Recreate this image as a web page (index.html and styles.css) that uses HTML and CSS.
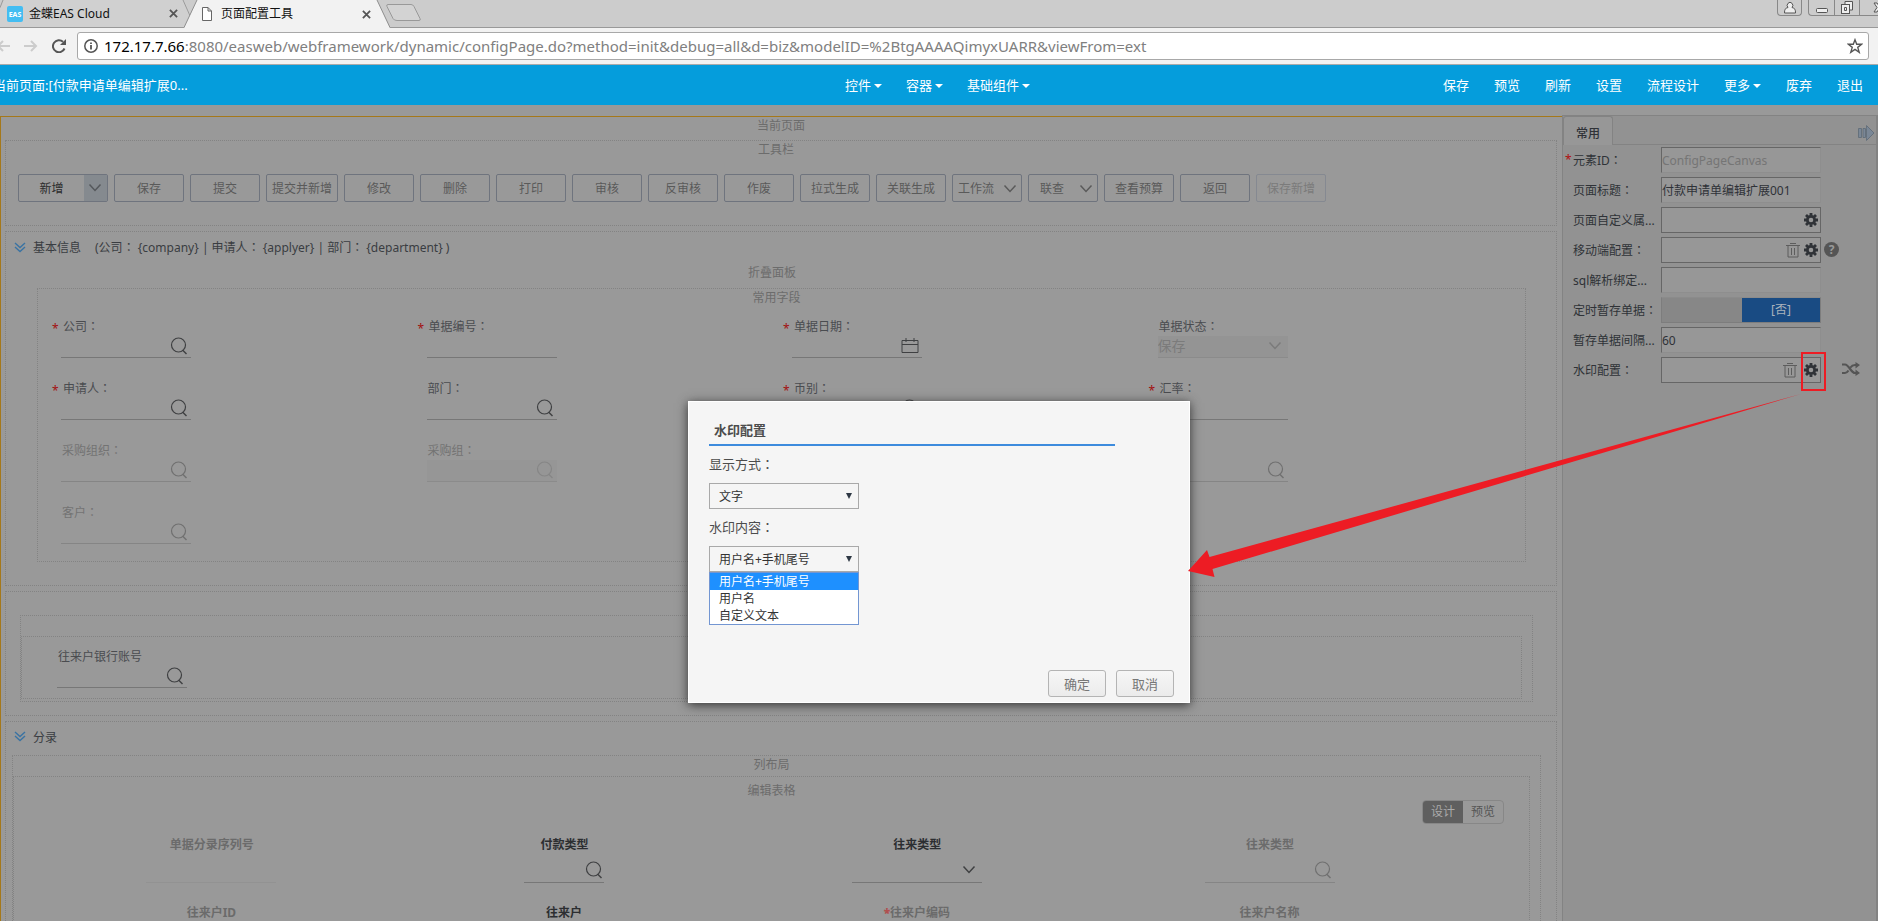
FILE: index.html
```html
<!DOCTYPE html>
<html lang="zh-CN">
<head>
<meta charset="utf-8">
<title>页面配置工具</title>
<link rel="stylesheet" href="styles.css">
</head>
<body>
<svg class="sprite" aria-hidden="true">
  <symbol id="search" viewBox="0 0 18 18"><ellipse cx="8.500" cy="8" rx="7" ry="7" fill="none" stroke="currentColor" stroke-width="1.200"/><path d="M12.500 13l4 4" fill="none" stroke="currentColor" stroke-width="1.500"/></symbol>
  <symbol id="chevron" viewBox="0 0 14 10"><path d="M1.500 1.500L7 7.500L12.500 1.500" fill="none" stroke="currentColor" stroke-width="1.500"/></symbol>
  <symbol id="calendar" viewBox="0 0 18 16"><path d="M1 2.500h16v12H1zM1 6.500h16M5 0v4M13 0v4" fill="none" stroke="currentColor" stroke-width="1"/></symbol>
  <symbol id="fold" viewBox="0 0 12 11"><path d="M1 1l5 4.500L11 1M1 5l5 4.500L11 5" fill="none" stroke="currentColor" stroke-width="1.400"/></symbol>
  <symbol id="gear" viewBox="0 0 14 14"><g fill="none" stroke="currentColor"><circle cx="7" cy="7" r="3.700" stroke-width="2.800"/><path stroke-width="2.800" d="M7 0v2.500M7 11.500V14M0 7h2.500M11.500 7H14M2 2l2 2M10 10l2 2M12 2l-2 2M4 10l-2 2"/></g></symbol>
  <symbol id="trash" viewBox="0 0 14 15"><path d="M0 2.500h14M4 .5h6M2 3v11h10V3M5.500 5v7M8.500 5v7" fill="none" stroke="currentColor"/></symbol>
  <symbol id="close" viewBox="0 0 10 10"><path d="M1 1l8 8M9 1l-8 8" stroke="currentColor" stroke-width="2" fill="none"/></symbol>
</svg>

<div class="tabstrip">
  <div class="tab tab-first">
    <svg class="tab-shape" viewBox="0 0 192 28" preserveAspectRatio="none"><path d="M0 28V8L4 0H184L197 28" fill="#d0d0d0"/><path d="M0 8L3 0M183 0l9 21" fill="none" stroke="#999"/></svg>
    <svg class="fav" viewBox="0 0 16 16"><rect width="16" height="16" rx="2" fill="#43bdf2"/><text x="8" y="11" text-anchor="middle" class="fav-text">EAS</text></svg>
    <span class="tab-title">金蝶EAS Cloud</span>
    <button class="tab-close" aria-label="关闭"><svg><use href="#close"/></svg></button>
  </div>
  <div class="tab tab-active">
    <svg class="tab-shape" viewBox="0 0 206 28" preserveAspectRatio="none"><path d="M0 28L13 0H193L206 28Z" fill="#f2f2f2"/><path d="M0 27.500L13 0M193 0L206 27.500" fill="none" stroke="#8f8f8f"/></svg>
    <svg class="page-ico" viewBox="0 0 10 14"><path d="M.5 .5h5.500l3.500 3.500v9.500h-9zM6 .5v3.500h3.500" fill="#fff" stroke="#666"/></svg>
    <span class="tab-title">页面配置工具</span>
    <button class="tab-close" aria-label="关闭"><svg><use href="#close"/></svg></button>
  </div>
  <button class="newtab" aria-label="新标签页"><svg viewBox="0 0 36 18"><path d="M2 .5h23q2 0 3 2l6 12q1 2-1 2H11q-3 0-4-2L1 2.500Q0 .5 2 .5z" fill="#d3d3d3" stroke="#999"/></svg></button>
  <div class="win">
    <button class="win-btn win-user" aria-label="用户"><svg viewBox="0 0 12 13"><path d="M4 6.500a2.800 3 0 1 1 4 0c3 .8 3.500 2 3.500 5.500H.5c0-3.500.5-4.700 3.500-5.500z" fill="#eee" stroke="#555"/></svg></button>
    <div class="win-group">
      <button class="win-btn" aria-label="最小化"><svg viewBox="0 0 12 13"><rect x=".5" y="7.500" width="11" height="4" rx="1" fill="#eee" stroke="#555"/></svg></button>
      <button class="win-btn" aria-label="还原"><svg viewBox="0 0 12 13"><path d="M4 3V.5h7.500v8.500H9" fill="#eee" stroke="#555"/><rect x=".5" y="3.500" width="8" height="9" fill="#eee" stroke="#555"/><path d="M3.500 6.500h2v3h-2z" fill="none" stroke="#555"/></svg></button>
      <button class="win-btn win-last" aria-label="关闭窗口"><svg viewBox="0 0 12 13"><path d="M1 2h3l2 3 2-3h3L8 6.500l3 4.500H8L6 8l-2 3H1l3-4.500z" fill="#eee" stroke="#555"/></svg></button>
    </div>
  </div>
</div>

<div class="navbar">
  <button class="nav-btn nav-dim" aria-label="后退"><svg viewBox="0 0 14 12"><path d="M14 6H2M7 1L2 6l5 5" fill="none" stroke="currentColor" stroke-width="2"/></svg></button>
  <button class="nav-btn nav-dim" aria-label="前进"><svg viewBox="0 0 14 12"><path d="M0 6h12M7 1l5 5-5 5" fill="none" stroke="currentColor" stroke-width="2"/></svg></button>
  <button class="nav-btn" aria-label="刷新"><svg viewBox="0 0 14 14"><path d="M12.500 9.500A6 6 0 1 1 11 2.800" fill="none" stroke="currentColor" stroke-width="2"/><path d="M14 0v6H8z" fill="currentColor"/></svg></button>
  <div class="omnibox">
    <svg class="info" viewBox="0 0 14 14"><circle cx="7" cy="7" r="6.200" fill="none" stroke="#555" stroke-width="1.500"/><path d="M7 6v4.500M7 3.500v1.500" stroke="#555" stroke-width="1.800"/></svg>
    <span class="url"><span class="host">172.17.7.66</span>:8080/easweb/webframework/dynamic/configPage.do?method=init&amp;debug=all&amp;d=biz&amp;modelID=%2BtgAAAAQimyxUARR&amp;viewFrom=ext</span>
    <svg class="star" viewBox="0 0 14 14"><path d="M7 1.500l1.500 4h4.300L9.400 8.200l1.300 4.300L7 10l-3.700 2.500 1.300-4.300L1.200 5.500h4.300z" fill="none" stroke="#555" stroke-width="1.200"/></svg>
  </div>
</div>

<header class="appbar">
  <div class="crumb">当前页面:[付款申请单编辑扩展0...</div>
  <nav class="menu"><a href="#" class="drop">控件</a><a href="#" class="drop">容器</a><a href="#" class="drop">基础组件</a></nav>
  <nav class="menu menu-right"><a href="#">保存</a><a href="#">预览</a><a href="#">刷新</a><a href="#">设置</a><a href="#">流程设计</a><a href="#" class="drop">更多</a><a href="#">废弃</a><a href="#">退出</a></nav>
</header>

<div class="work">
  <main class="canvas">
    <div class="hint hint-page">当前页面</div>
    <section class="box toolbox">
      <div class="hint">工具栏</div>
      <div class="tools">
        <button class="tool tool-new"><span>新增</span><i><svg><use href="#chevron"/></svg></i></button>
        <button class="tool">保存</button><button class="tool">提交</button><button class="tool tool-wide">提交并新增</button><button class="tool">修改</button><button class="tool">删除</button><button class="tool">打印</button><button class="tool">审核</button><button class="tool">反审核</button><button class="tool">作废</button><button class="tool">拉式生成</button><button class="tool">关联生成</button>
        <button class="tool tool-drop">工作流<svg><use href="#chevron"/></svg></button>
        <button class="tool tool-drop tool-short">联查<svg><use href="#chevron"/></svg></button>
        <button class="tool">查看预算</button><button class="tool">返回</button><button class="tool" disabled>保存新增</button>
      </div>
    </section>

    <section class="box basic">
      <h2 class="sec-title"><svg><use href="#fold"/></svg><span>基本信息</span><span class="sum">(公司<span class="c" lang="zh-TW">：</span> {company} | 申请人<span class="c" lang="zh-TW">：</span> {applyer} | 部门<span class="c" lang="zh-TW">：</span> {department} )</span></h2>
      <div class="hint">折叠面板</div>
      <div class="box fields-box">
        <div class="hint">常用字段</div>
        <div class="fields">
          <div class="field req"><label for="f1">公司<span class="c" lang="zh-TW">：</span></label><div class="ctl"><input id="f1"><svg><use href="#search"/></svg></div></div>
          <div class="field req"><label for="f2">单据编号<span class="c" lang="zh-TW">：</span></label><div class="ctl"><input id="f2"></div></div>
          <div class="field req"><label for="f3">单据日期<span class="c" lang="zh-TW">：</span></label><div class="ctl"><input id="f3"><svg class="cal"><use href="#calendar"/></svg></div></div>
          <div class="field"><label for="f4">单据状态<span class="c" lang="zh-TW">：</span></label><div class="ctl off"><select id="f4" disabled><option>保存</option></select><svg class="chev"><use href="#chevron"/></svg></div></div>
          <div class="field req"><label for="f5">申请人<span class="c" lang="zh-TW">：</span></label><div class="ctl"><input id="f5"><svg><use href="#search"/></svg></div></div>
          <div class="field"><label for="f6">部门<span class="c" lang="zh-TW">：</span></label><div class="ctl"><input id="f6"><svg><use href="#search"/></svg></div></div>
          <div class="field req"><label for="f7">币别<span class="c" lang="zh-TW">：</span></label><div class="ctl"><input id="f7"><svg><use href="#search"/></svg></div></div>
          <div class="field req"><label for="f8">汇率<span class="c" lang="zh-TW">：</span></label><div class="ctl"><input id="f8"></div></div>
          <div class="field dim"><label for="f9">采购组织<span class="c" lang="zh-TW">：</span></label><div class="ctl"><input id="f9"><svg><use href="#search"/></svg></div></div>
          <div class="field dim"><label for="f10">采购组<span class="c" lang="zh-TW">：</span></label><div class="ctl off"><input id="f10" disabled><svg><use href="#search"/></svg></div></div>
          <div class="field"></div>
          <div class="field dim"><div class="ctl low"><input aria-label="供应商"><svg><use href="#search"/></svg></div></div>
          <div class="field dim"><label for="f12">客户<span class="c" lang="zh-TW">：</span></label><div class="ctl"><input id="f12"><svg><use href="#search"/></svg></div></div>
        </div>
      </div>
    </section>

    <section class="box bank">
      <div class="box bank-outer"><div class="box bank-inner">
        <div class="field"><label for="f13">往来户银行账号</label><div class="ctl"><input id="f13"><svg><use href="#search"/></svg></div></div>
      </div></div>
    </section>

    <section class="box entries">
      <h2 class="sec-title"><svg><use href="#fold"/></svg><span>分录</span></h2>
      <div class="box cols">
        <div class="hint">列布局</div>
        <div class="box grid-box">
          <div class="hint">编辑表格</div>
          <div class="modes"><button class="on">设计</button><button>预览</button></div>
          <div class="cells">
            <div class="cell dim"><label for="g1">单据分录序列号</label><div class="ctl faint"><input id="g1"></div></div>
            <div class="cell"><label for="g2">付款类型</label><div class="ctl small"><input id="g2"><svg><use href="#search"/></svg></div></div>
            <div class="cell"><label for="g3">往来类型</label><div class="ctl"><input id="g3"><svg class="chev"><use href="#chevron"/></svg></div></div>
            <div class="cell dim"><label for="g4">往来类型</label><div class="ctl"><input id="g4"><svg><use href="#search"/></svg></div></div>
            <div class="cell dim"><span>往来户ID</span></div>
            <div class="cell"><span>往来户</span></div>
            <div class="cell dim"><span><b class="star-mark">*</b>往来户编码</span></div>
            <div class="cell dim"><span>往来户名称</span></div>
          </div>
        </div>
      </div>
    </section>
  </main>

  <aside class="side">
    <div class="side-tabs"><button class="side-tab">常用</button><svg class="side-arrow" viewBox="0 0 17 16"><path d="M.5 3.500h3v9h-3zM5 3.500h2.500v9H5zM8.500 3.500V.5L16 8l-7.500 7.500v-3z" fill="#7a8796" stroke="#5d6976" stroke-width=".8"/></svg></div>
    <div class="props">
      <div class="prop must"><label for="p1">元素ID<span class="c" lang="zh-TW">：</span></label><div class="pin"><input id="p1" value="ConfigPageCanvas" disabled></div></div>
      <div class="prop"><label for="p2">页面标题<span class="c" lang="zh-TW">：</span></label><div class="pin"><input id="p2" value="付款申请单编辑扩展001"></div></div>
      <div class="prop"><label for="p3">页面自定义属...</label><div class="pin full"><input id="p3"><svg class="gear"><use href="#gear"/></svg></div></div>
      <div class="prop"><label for="p4">移动端配置<span class="c" lang="zh-TW">：</span></label><div class="pin full"><input id="p4"><svg class="trash"><use href="#trash"/></svg><svg class="gear"><use href="#gear"/></svg></div><span class="help">?</span></div>
      <div class="prop"><label for="p5">sql解析绑定...</label><div class="pin"><input id="p5"></div></div>
      <div class="prop"><span class="plabel">定时暂存单据<span class="c" lang="zh-TW">：</span></span><button class="switch" role="switch" aria-checked="false" aria-label="定时暂存单据"><i></i><b>[否]</b></button></div>
      <div class="prop"><label for="p7">暂存单据间隔...</label><div class="pin"><input id="p7" value="60"></div></div>
      <div class="prop"><label for="p8">水印配置<span class="c" lang="zh-TW">：</span></label><div class="pin full"><input id="p8"><svg class="trash trash-gap"><use href="#trash"/></svg><svg class="gear"><use href="#gear"/></svg></div>
        <svg class="shuffle" viewBox="0 0 18 14"><path d="M0 2.500h3c4 0 6 8.500 10 8.500h1M0 11h3c1.500 0 2.500-1 3.500-2.500M8.500 5.500C9.500 4 11 3 13 3h1" fill="none" stroke="currentColor" stroke-width="2.200"/><path d="M13.500 0L18 3l-4.500 3.500zM13.500 7.500L18 11l-4.500 3z" fill="currentColor"/></svg></div>
    </div>
  </aside>
</div>

<div class="dialog" role="dialog" aria-label="水印配置">
  <h3>水印配置</h3>
  <label for="d1">显示方式<span class="c" lang="zh-TW">：</span></label>
  <div class="pick"><select id="d1"><option>文字</option></select></div>
  <label for="d2">水印内容<span class="c" lang="zh-TW">：</span></label>
  <div class="pick"><select id="d2"><option>用户名+手机尾号</option></select>
    <ul class="list" role="listbox"><li class="sel" role="option">用户名+手机尾号</li><li role="option">用户名</li><li role="option">自定义文本</li></ul>
  </div>
  <div class="actions"><button>确定</button><button>取消</button></div>
</div>

<svg class="callout" viewBox="0 0 640 230" aria-hidden="true">
  <rect x="614" y="3" width="23" height="37" fill="none" stroke="#ed1c24" stroke-width="2"/>
  <path d="M0 221L19 200L21.500 207L613 44L24.500 219L26.500 227Z" fill="#ed1c24"/>
</svg>
</body>
</html>
```

FILE: styles.css
```css
* { box-sizing: border-box; }
body {
  margin: 0; height: 100vh; overflow: hidden; position: relative;
  display: flex; flex-direction: column;
  background: #999; color: #2f3237;
  font: 12px/18px "Noto Sans", "Noto Sans CJK SC", sans-serif;
}
button, input, select { font: inherit; color: inherit; margin: 0; padding: 0; border: 0; background: none; outline: 0; }
h2, h3, ul { margin: 0; padding: 0; font-weight: normal; font-size: 12px; list-style: none; }
a { color: inherit; text-decoration: none; }
i { font-style: normal; }
svg { display: block; flex: none; }
.sprite { position: absolute; width: 0; height: 0; }
/* full-width colon centred in its cell */
.c { font-family: "Noto Sans CJK TC", sans-serif; line-height: 1; }

/* browser frame */
.tabstrip { flex: none; height: 28px; display: flex; background: #ccc; border-bottom: 1px solid #999; }
.tab { position: relative; flex: none; display: flex; align-items: center; height: 28px; color: #111; }
.tab > * { position: relative; }
.tab .tab-shape { position: absolute; left: 0; top: 0; width: 100%; height: 100%; }
.tab-first { width: 184px; padding: 0 4px 0 7px; height: 27px; }
.tab-first .tab-shape { width: 192px; }
.tab-active { width: 206px; padding: 0 18px; z-index: 1; }
.fav { width: 16px; height: 16px; margin-right: 6px; }
.fav-text { font: bold 7px "Noto Sans", sans-serif; fill: #fff; }
.page-ico { width: 10px; height: 14px; margin-right: 9px; }
.tab-title { flex: 1; white-space: nowrap; }
.tab-close { width: 10px; height: 10px; color: #555; }
.tab-close svg { width: 9px; height: 9px; }
.tab-first .tab-close { margin-right: 1px; }
.newtab { width: 36px; padding-bottom: 2px; margin-left: -4px; }
.newtab svg { width: 36px; height: 18px; }
.win { margin-left: auto; display: flex; gap: 6px; height: 16px; }
.win-group { display: flex; border: 1px solid #888; border-top: 0; border-right: 0; border-radius: 0 0 0 4px; overflow: hidden; }
.win-btn { width: 25px; display: flex; justify-content: center; align-items: center; }
.win-btn svg { width: 12px; height: 13px; }
.win-btn + .win-btn { border-left: 1px solid #888; }
.win-user { border: 1px solid #888; border-top: 0; border-radius: 0 0 4px 4px; }
.win-last { width: 19px; justify-content: flex-end; overflow: hidden; }
.win-last svg { margin-right: -7px; }

.navbar { flex: none; height: 37px; display: flex; align-items: center; padding: 0 9px 0 0; background: #f2f2f2; border-bottom: 1px solid #aaa; color: #555; }
.nav-btn { width: 14px; height: 14px; margin-right: 14px; }
.nav-btn:first-child { margin-left: -4px; }
.nav-btn svg { width: 14px; height: 14px; }
.nav-dim { color: #ccc; }
.navbar .nav-btn:nth-child(3) { margin-right: 11px; }
.omnibox { flex: 1; height: 28px; display: flex; align-items: center; padding: 0 5px 0 6px; background: #fff; border: 1px solid #a8a8a8; border-radius: 3px; }
.info { width: 14px; height: 14px; margin-right: 6px; }
.url { flex: 1; font-size: 15px; color: #808080; white-space: nowrap; }
.host { color: #000; }
.star { width: 16px; height: 16px; }

/* application header */
.appbar { flex: none; height: 40px; display: grid; grid-template-columns: 1fr auto 1fr; align-items: center; padding-right: 15px; background: #059ddc; color: #fff; font-size: 13px; }
.crumb { margin-left: -7px; white-space: nowrap; }
.menu { display: flex; gap: 24px; padding-left: 12px; white-space: nowrap; }
.menu-right { justify-content: flex-end; gap: 25px; }
.drop::after { content: ""; display: inline-block; margin-left: 3px; vertical-align: 2px; border: 4px solid transparent; border-top-color: #fff; border-bottom: 0; }

/* canvas */
.work { flex: 1; min-height: 0; display: flex; padding-top: 11px; }
.canvas { flex: 1; min-width: 0; display: flex; flex-direction: column; gap: 5px; padding: 0 5px 0 4px; overflow: hidden; border: 1px solid #a5781a; border-width: 1px 0 0 1px; }
.box { border: 1px dotted #838383; flex: none; }
.hint { text-align: center; color: #6c6c6c; line-height: 18px; padding-right: 10px; }
.hint-page { padding: 0; }
.toolbox { height: 86px; }
.tools { display: flex; gap: 6px; padding: 15px 12px; }
.tool { flex: none; width: 70px; height: 28px; padding-top: 1px; white-space: nowrap; color: #5a5a5a; border: 1px solid #6f747e; border-radius: 2px; }
.tool:disabled { color: #7b7b7b; border-color: #858991; }
.tool-wide { width: 72px; }
.tool-new { width: 90px; padding: 0; display: flex; color: #2c2c2c; }
.tool-new span { flex: 1; line-height: 27px; }
.tool-new i { width: 23px; height: 26px; padding: 8px 4px; background: #858a8f; color: #55585c; }
.tool svg { width: 14px; height: 10px; }
.tool-drop { display: flex; align-items: center; justify-content: space-between; padding: 1px 4px 0 5px; }
.tool-short { padding-left: 11px; }
.sec-title { display: flex; align-items: center; color: #3a3d42; height: 32px; padding-left: 8px; }
.sec-title svg { width: 12px; height: 11px; margin: 0 7px 2px 0; color: #3a73a3; }
.sum { margin-left: 14px; }
.basic { height: 355px; }
.basic > .hint { padding-right: 18px; height: 24px; }
.fields-box { margin: 0 30px 0 31px; height: 274px; }
.fields { display: grid; grid-template-columns: repeat(4, 1fr); grid-auto-rows: 62px; padding: 11px 2px 0 23px; }
.field { position: relative; color: #4a4c50; }
.field label, .cell label { display: block; padding-left: 1px; height: 18px; white-space: nowrap; }
.req label { padding-left: 2px; }
.req label::before { content: "*"; position: absolute; left: -9px; top: 2px; color: #a31010; }
.ctl { width: 130px; height: 22px; display: flex; align-items: center; border-bottom: 1px solid #777; padding: 0 3px 2px 0; color: #3f4042; }
.ctl input, .ctl select { flex: 1; min-width: 0; width: 100%; height: 100%; appearance: none; }
.ctl svg { width: 18px; height: 18px; }
.ctl .cal { height: 16px; }
.ctl .chev { width: 14px; height: 10px; margin-right: 3px; color: inherit; }
.ctl.off { background: #949494; color: #7b7b7b; border-color: #8b8b8b; }
.ctl.off select { opacity: 1; font-size: 14px; line-height: 18px; }
.dim { color: #737373; }
.dim .ctl { color: #707070; border-color: #858585; }
.dim .ctl.off { color: #868686; border-color: #8b8b8b; background: #969696; }
.ctl.low { margin-top: 18px; }
.bank { height: 125px; padding: 23px 23px 0 14px; }
.bank-outer { height: 87px; padding: 20px 10px 0 0; }
.bank-inner { height: 63px; padding: 11px 35px; }
.entries { height: 400px; padding: 0 15px 0 6px; }
.entries .sec-title { height: 33px; padding: 0 0 2px 2px; }
.cols { height: 360px; padding-right: 10px; }
.cols > .hint { height: 20px; padding: 0; }
.grid-box { height: 340px; }
.grid-box > .hint { padding-top: 5px; height: 23px; padding-right: 0; }
.modes { display: flex; width: 82px; margin: 0 25px 0 auto; height: 24px; border: 1px solid #878787; border-radius: 4px; overflow: hidden; }
.modes button { flex: 1; color: #555; }
.modes .on { background: #5f5f5f; color: #aaa; }
.cells { display: grid; grid-template-columns: repeat(4, 1fr); grid-auto-rows: 68px; padding: 12px 83px 0 21px; }
.cell { display: flex; flex-direction: column; align-items: center; gap: 6px; font-weight: bold; color: #2c2e31; }
.cell .ctl { height: 23px; }
.cell.dim { color: #6b6b6b; }
.cell .small { width: 80px; padding-right: 1px; }
.dim .ctl.faint { border-color: #929292; }
.star-mark { color: #b05050; }

/* property panel */
.side { flex: none; width: 316px; margin-top: -1px; background: #929292; border: 1px solid #838383; border-width: 1px 2px 0 1px; }
.side-tabs { height: 29px; display: flex; justify-content: space-between; align-items: center; border-bottom: 1px solid #838383; }
.side-tab { width: 50px; height: 29px; margin: 0 0 -1px 0; padding-top: 6px; background: #979797; border: 1px solid #838383; border-bottom: 0; border-radius: 3px 3px 0 0; font-weight: 500; }
.side-arrow { width: 17px; height: 16px; margin: 5px 1px 0 0; }
.props { display: flex; flex-direction: column; gap: 4px; padding: 2px 0 0 10px; }
.prop { position: relative; display: flex; align-items: center; height: 26px; }
.prop label, .plabel { flex: none; width: 88px; padding-top: 1px; white-space: nowrap; }
.must::before { content: "*"; position: absolute; left: -8px; top: 4px; color: #b00f0f; }
.pin { flex: none; width: 160px; height: 26px; display: flex; align-items: center; gap: 4px; padding-right: 2px; background: #979797; border: 1px solid #8e8e8e; border-top-color: #666; border-left-color: #666; }
.pin.full { border-color: #666; }
.pin input { flex: 1; min-width: 0; height: 100%; }
.pin input:disabled { color: #757575; }
.gear { width: 14px; height: 14px; }
.trash { width: 14px; height: 15px; color: #5d5d5d; }
.trash-gap { margin-right: 3px; }
.help { width: 15px; height: 15px; margin: 0 0 2px 3px; border-radius: 50%; background: #555; color: #999; font: bold 12px/15px "Noto Sans", sans-serif; text-align: center; }
.shuffle { width: 18px; height: 14px; margin: 0 0 2px 21px; color: #555; }
.switch { width: 160px; height: 26px; display: flex; border: 1px solid #7d7d7d; border-top-color: #8b8b8b; background: #878787; }
.switch i { flex: 1; }
.switch b { width: 78px; line-height: 24px; background: #194b83; color: #a9b3bd; font-weight: normal; }

/* watermark dialog */
.dialog { position: absolute; left: 50%; top: 401px; width: 502px; height: 302px; margin-left: -251px; padding: 17px 15px 5px 20px; display: flex; flex-direction: column; background: #f5f5f5; border: 1px solid #fff; box-shadow: 0 2px 10px #333; color: #4c4c4c; font-size: 13px; }
.dialog h3 { width: 406px; height: 27px; padding-left: 5px; line-height: 22px; font-size: 13px; font-weight: bold; border-bottom: 2px solid #3d8bdd; flex: none; }
.dialog label { margin: 9px 0 10px; line-height: 18px; }
.pick { position: relative; width: 150px; height: 26px; font-size: 12px; color: #333; }
.pick select { width: 100%; height: 26px; padding: 1px 0 0 9px; appearance: none; border: 1px solid #a9a9a9; }
.pick::after { content: ""; position: absolute; right: 7px; top: 10px; border: 3px solid transparent; border-top: 6px solid #2e3844; border-bottom: 0; }
.list { position: absolute; left: 0; top: 26px; width: 150px; background: #fff; border: 1px solid #7396d2; }
.list li { height: 17px; line-height: 17px; padding-left: 9px; }
.list .sel { background: #1e90ff; color: #fff; }
.actions { margin-top: auto; display: flex; justify-content: flex-end; gap: 10px; }
.actions button { width: 58px; height: 27px; color: #777; border: 1px solid #b4b4b4; border-radius: 3px; background: linear-gradient(#f6f6f6, #ebebeb); }

.callout { position: absolute; right: 50px; top: 350px; width: 640px; height: 230px; pointer-events: none; }
```
